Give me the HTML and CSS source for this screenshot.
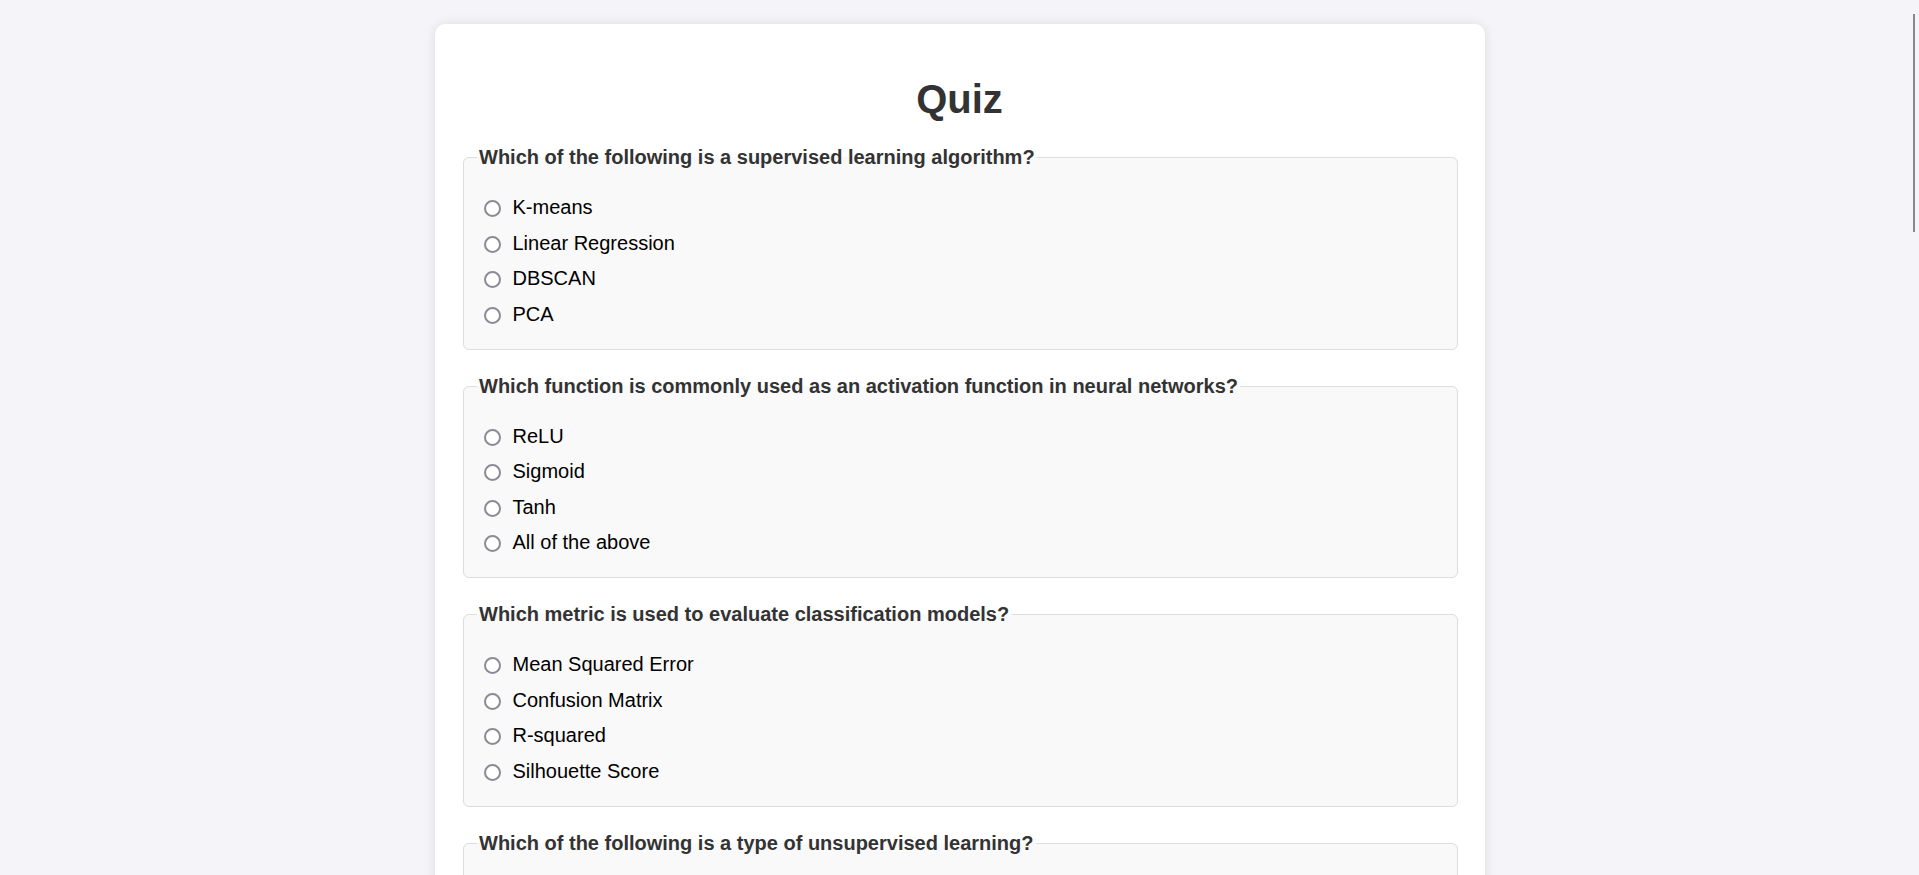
FILE: index.html
```html
<!DOCTYPE html>
<html lang="en">
<head>
<meta charset="utf-8">
<title>Quiz</title>
<link rel="stylesheet" href="styles.css">
</head>
<body>
<div class="quiz">
  <h1 class="quiz-title">Quiz</h1>
  <form class="quiz-form">
    <fieldset class="question">
      <legend class="question-title">Which of the following is a supervised learning algorithm?</legend>
      <label class="option"><input type="radio" name="q1" class="radio"><span>K-means</span></label>
      <label class="option"><input type="radio" name="q1" class="radio"><span>Linear Regression</span></label>
      <label class="option"><input type="radio" name="q1" class="radio"><span>DBSCAN</span></label>
      <label class="option"><input type="radio" name="q1" class="radio"><span>PCA</span></label>
    </fieldset>
    <fieldset class="question">
      <legend class="question-title">Which function is commonly used as an activation function in neural networks?</legend>
      <label class="option"><input type="radio" name="q2" class="radio"><span>ReLU</span></label>
      <label class="option"><input type="radio" name="q2" class="radio"><span>Sigmoid</span></label>
      <label class="option"><input type="radio" name="q2" class="radio"><span>Tanh</span></label>
      <label class="option"><input type="radio" name="q2" class="radio"><span>All of the above</span></label>
    </fieldset>
    <fieldset class="question">
      <legend class="question-title">Which metric is used to evaluate classification models?</legend>
      <label class="option"><input type="radio" name="q3" class="radio"><span>Mean Squared Error</span></label>
      <label class="option"><input type="radio" name="q3" class="radio"><span>Confusion Matrix</span></label>
      <label class="option"><input type="radio" name="q3" class="radio"><span>R-squared</span></label>
      <label class="option"><input type="radio" name="q3" class="radio"><span>Silhouette Score</span></label>
    </fieldset>
    <fieldset class="question">
      <legend class="question-title">Which of the following is a type of unsupervised learning?</legend>
      <label class="option"><input type="radio" name="q4" class="radio"><span>Classification</span></label>
      <label class="option"><input type="radio" name="q4" class="radio"><span>Regression</span></label>
      <label class="option"><input type="radio" name="q4" class="radio"><span>Clustering</span></label>
      <label class="option"><input type="radio" name="q4" class="radio"><span>Reinforcement Learning</span></label>
    </fieldset>
    <button type="button" class="submit">Submit</button>
  </form>
</div>
<div class="scroll-thumb"></div>
</body>
</html>
```
FILE: styles.css
```css
html {
  scrollbar-width: none;
}
html::-webkit-scrollbar {
  width: 0;
  height: 0;
}
body {
  margin: 0;
  background: #f4f4f9;
  font-family: "Liberation Sans", Arial, sans-serif;
  color: #000;
}
.quiz {
  max-width: 1000px;
  margin: 24px auto;
  padding: 25px;
  background: #fff;
  border-radius: 10px;
  box-shadow: 0 0 12px rgba(0, 0, 0, 0.1);
}
.quiz-title {
  margin: 27px 0 24px;
  font-size: 40px;
  line-height: 46px;
  font-weight: bold;
  text-align: center;
  color: #333;
}
.quiz-form {
  margin: 0;
}
.question {
  margin: 0 2px 25px 3.5px;
  padding: 14.5px 12.5px 10.5px;
  border: 1px solid #ddd;
  border-radius: 6px;
  background: #f9f9f9;
}
.question-title {
  padding: 0 2.5px;
  font-size: 20px;
  line-height: 23px;
  font-weight: bold;
  color: #333;
}
.option {
  display: flex;
  align-items: center;
  margin: 12.5px 0;
  font-size: 20px;
  line-height: 23px;
  color: #000;
}
.radio {
  appearance: none;
  -webkit-appearance: none;
  flex: none;
  box-sizing: border-box;
  width: 17px;
  height: 17px;
  margin: 2px 12px 0 7px;
  border: 2px solid #8b8b96;
  border-radius: 50%;
  background: #fff;
}
.submit {
  display: block;
  width: 100%;
  padding: 12px;
  border: none;
  border-radius: 6px;
  background: #5c67f2;
  color: #fff;
  font-family: inherit;
  font-size: 20px;
}
.scroll-thumb {
  position: fixed;
  top: 14px;
  right: 4px;
  width: 2px;
  height: 218px;
  background: #8a8a8a;
}
```
